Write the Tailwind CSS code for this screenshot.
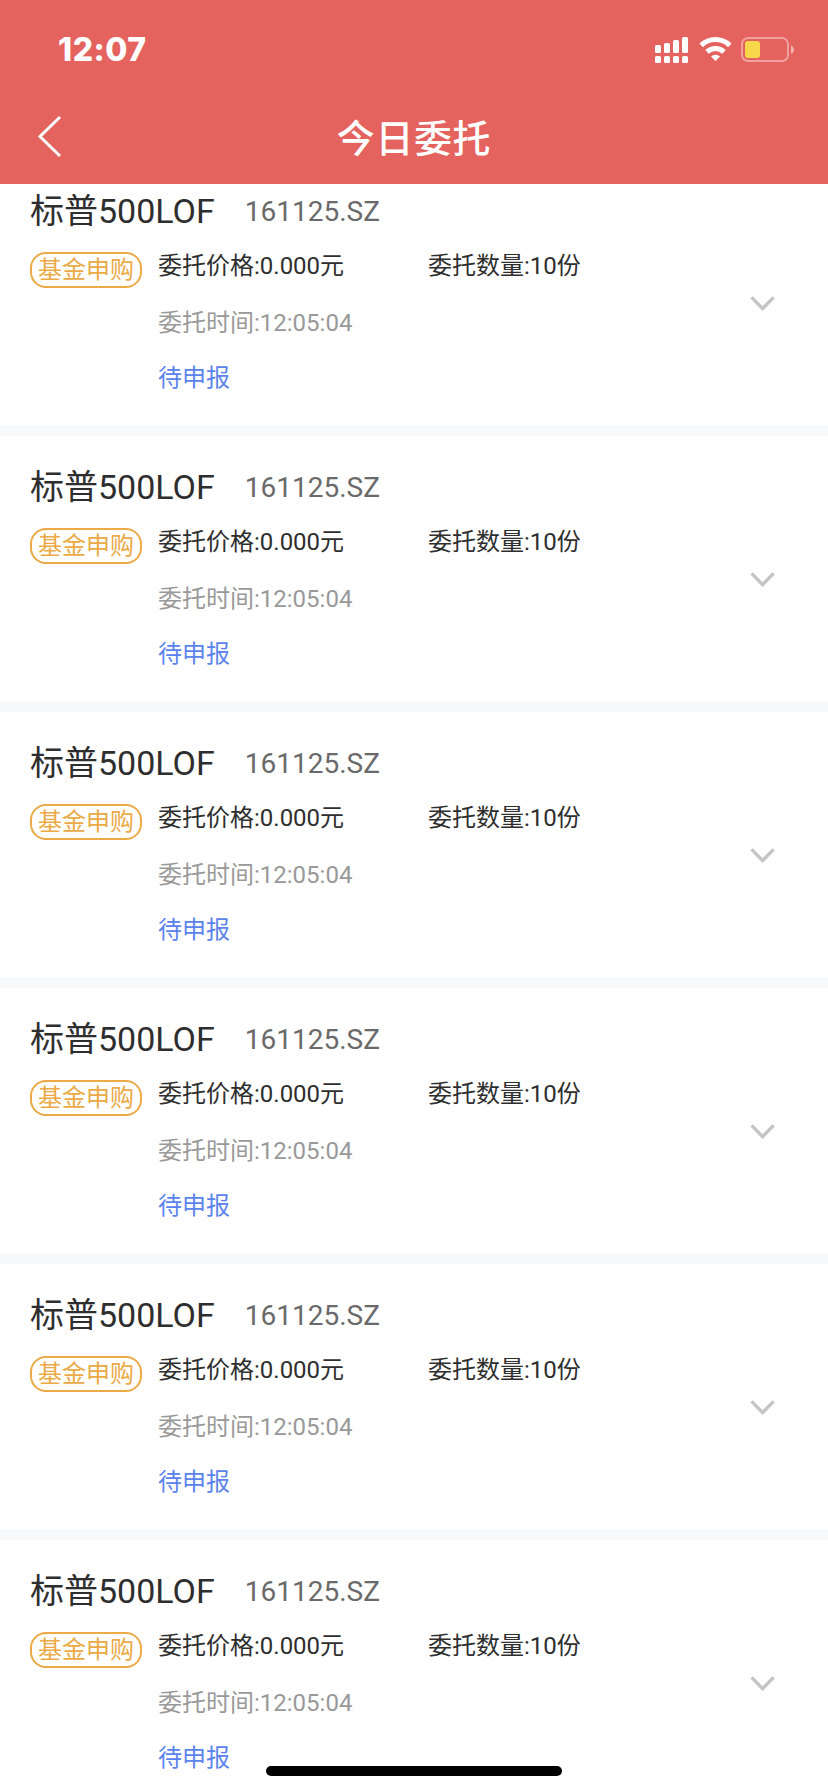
<!DOCTYPE html>
<html lang="zh-CN">
<head>
  <meta charset="UTF-8">
  <meta name="viewport" content="width=device-width, initial-scale=1.0">
  <title>今日委托</title>
  <script src="https://cdn.jsdelivr.net/npm/@tailwindcss/browser@4"></script>
</head>
<body class="h-screen flex flex-col overflow-hidden bg-white font-['Roboto','Noto_Sans_CJK_SC',sans-serif]">

  <!-- Header -->
  <header class="relative z-10 h-46 shrink-0 bg-[#e5635f] text-white">
    <div class="flex h-24 items-center justify-between pl-[58px] pr-[33px] pt-1">
      <span class="font-['Inter',sans-serif] text-[32px] leading-10 font-extrabold tracking-[0.5px]">12:07</span>
      <div class="flex items-center">
        <svg class="w-[33px] h-[26px]" viewBox="0 0 33 26" fill="currentColor">
          <rect x="0" y="8" width="6" height="8" rx="1.5"/>
          <rect x="9" y="6" width="6" height="10" rx="1.5"/>
          <rect x="18" y="3" width="6" height="13" rx="1.5"/>
          <rect x="27" y="0" width="6" height="16" rx="1.5"/>
          <rect x="0" y="19" width="6" height="7" rx="1.5"/>
          <rect x="9" y="19" width="6" height="7" rx="1.5"/>
          <rect x="18" y="19" width="6" height="7" rx="1.5"/>
          <rect x="27" y="19" width="6" height="7" rx="1.5"/>
        </svg>
        <svg class="ml-[11px] w-[33px] h-[26px]" viewBox="0 0 33 26" fill="none" stroke="currentColor" stroke-width="5">
          <path d="M2.2 8.4A20.5 20.5 0 0 1 30.8 8.4"/>
          <path d="M8 14.9A12.3 12.3 0 0 1 25 14.9"/>
          <path d="M12 19.4A6.6 6.6 0 0 1 21 19.4L16.5 24Z" fill="currentColor" stroke="none"/>
        </svg>
        <svg class="ml-[9px] w-[54px] h-[26px]" viewBox="0 0 54 26">
          <rect x="1" y="1" width="46" height="23" rx="6" fill="none" stroke="#fff" stroke-opacity=".4" stroke-width="2"/>
          <rect x="4" y="4" width="15" height="17" rx="3" fill="#f8d84a"/>
          <path d="M50 8.5C54 10 54 15.5 50 17Z" fill="#fff" fill-opacity=".5"/>
        </svg>
      </div>
    </div>
    <div class="grid h-20 grid-cols-3 items-center">
      <svg class="ml-9 w-7 h-11" viewBox="0 0 28 44" fill="none" stroke="currentColor" stroke-width="3">
        <path d="M24 3L4 22.5L24 42"/>
      </svg>
      <h1 class="pt-1.5 text-center text-[38px] leading-[44px] font-medium tracking-[0.6px]">今日委托</h1>
    </div>
  </header>

  <!-- Orders -->
  <main id="orders" class="-mt-6"></main>

  <!-- Home indicator -->
  <div class="fixed bottom-4 left-[266px] h-[10px] w-[296px] rounded-full bg-black"></div>

  <script>
    const order = { name: "标普500LOF", code: "161125.SZ", type: "基金申购", price: "0.000元", amount: "10份", time: "12:05:04", status: "待申报" };
    const orders = Array(6).fill(order);

    document.getElementById("orders").innerHTML = orders.map(o => `
      <section class="flex h-[276px] items-start border-b-[11px] border-[#f8f9fb] pt-7 pl-[30px] text-2xl text-[#2e2e2e]">
        <div class="w-[720px]">
          <div class="flex items-center gap-[30px] leading-12">
            <h2 class="pb-0.5 text-[34px] leading-[46px]">${o.name}</h2>
            <span class="text-[28px] text-[#6a6a6a]">${o.code}</span>
          </div>
          <div class="mt-3 flex items-start">
            <span class="mt-1 mr-4 flex h-9 w-28 items-center justify-center rounded-2xl border-2 border-[#ebaa46] leading-8 text-[#ebaa46]">${o.type}</span>
            <div class="leading-9">
              <div class="flex">
                <p class="w-[270px]">委托价格:${o.price}</p>
                <p>委托数量:${o.amount}</p>
              </div>
              <p class="mt-[21px] text-[#999]">委托时间:${o.time}</p>
              <p class="mt-[19px] text-[#5a83ee]">${o.status}</p>
            </div>
          </div>
        </div>
        <svg class="mt-[107px] h-4 w-[25px]" viewBox="0 0 25 16" fill="none" stroke="#c4c4c4" stroke-width="3.4">
          <path d="M1.6 2.4L12.6 13.6L23.6 2.4"/>
        </svg>
      </section>
    `).join("");
  </script>

</body>
</html>
